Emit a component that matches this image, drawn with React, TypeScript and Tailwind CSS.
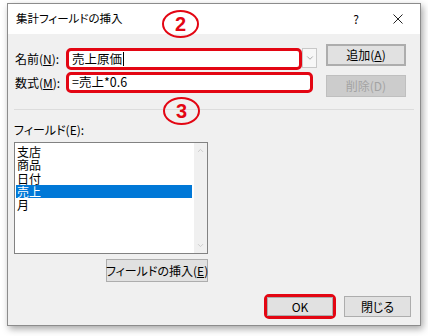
import { ChevronDown, ChevronUp } from 'lucide-react';

const jp = "font-['Meiryo_UI','Noto_Sans_CJK_JP',sans-serif] [font-feature-settings:'palt']";

function Marker({ n, className }: { n: string; className: string }) {
  // red annotation ellipse drawn over the dialog
  return (
    <div
      className={`absolute w-[37px] h-[28px] rounded-[50%] border-[2.5px] border-[#e30613] flex items-center justify-center ${className}`}
    >
      <span className="font-['Liberation_Sans',sans-serif] font-bold text-[20px] leading-none text-[#e30613]">{n}</span>
    </div>
  );
}

function Btn({
  children,
  className = '',
}: {
  children: React.ReactNode;
  className?: string;
}) {
  return (
    <div
      className={`flex items-center justify-center whitespace-nowrap bg-[#e1e1e1] border border-[#adadad] text-[12px] font-normal text-black ${className}`}
    >
      {children}
    </div>
  );
}

export default function App() {
  const fields = ['支店', '商品', '日付', '売上', '月'];

  return (
    <div className={`relative w-[428px] h-[336px] bg-white pt-[3px] pl-[7px] ${jp}`}>
      <div className="w-[414px] h-[323px] border border-[#8c8c8c] flex flex-col shadow-[2px_3px_7px_rgba(0,0,0,0.35)]">
        {/* title bar */}
        <div className="h-[30px] shrink-0 bg-white flex items-center pl-[8px] text-[11.5px] text-black">
          <span>集計フィールドの挿入</span>
          <span className="ml-auto w-[10px] text-center text-[12px]">?</span>
          <svg className="ml-[32px] mr-[17px]" width="10" height="10" viewBox="0 0 10 10">
            <path d="M0.5 0.5 L9.5 9.5 M9.5 0.5 L0.5 9.5" stroke="#222" strokeWidth="1" />
          </svg>
        </div>

        {/* body */}
        <div className="flex-1 bg-[#f0f0f0] flex flex-col">
          <div className="flex items-start pt-[10px]">
            <div className="flex flex-col gap-[2px] mt-[4px] pl-[7px] text-[12px]">
              <div className="flex items-center h-[22px]">
                <span className="w-[51px]">
                  名前(<span className="underline">N</span>):
                </span>
                <div className="w-[236px] h-[22px] bg-white border-[3px] border-[#e30613] rounded-[5px] flex items-center pl-[3px] text-[12.5px]">
                  売上原価
                  <span className="ml-[1px] w-px h-[14px] bg-black" />
                </div>
                <div className="w-[15px] h-[20px] self-start bg-[#f7f7f7] border border-[#c8c8c8] flex items-center justify-center">
                  <ChevronDown className="w-[10px] h-[10px] text-[#7a7a7a]" strokeWidth={1.5} />
                </div>
              </div>
              <div className="flex items-center h-[21px]">
                <span className="w-[51px]">
                  数式(<span className="underline">M</span>):
                </span>
                <div className="w-[247px] h-[21px] bg-white border-[3px] border-[#e30613] rounded-[5px] flex items-center pl-[3px] text-[12.5px]">
                  =売上*0.6
                </div>
              </div>
            </div>
            <div className="ml-[9px] flex flex-col gap-[9px]">
              <Btn className="w-[80px] h-[22px] border-[#0078d7] border-2">
                追加(<span className="underline">A</span>)
              </Btn>
              <div className="w-[80px] h-[22px] flex items-center justify-center bg-[#cccccc] border border-[#bfbfbf] text-[12px] text-[#a3a3a3]">
                削除(D)
              </div>
            </div>
          </div>

          <div className="mt-[12px] mx-[6px] border-t border-[#dcdcdc]" />

          <div className="mt-[12px] pl-[6px] h-[16px] flex items-center text-[12px]">フィールド(E):</div>

          <div className="mt-[4px] ml-[6px] w-[194px] h-[112px] bg-white border border-[#828282] flex">
            <div className="flex-1 pt-[2px] pl-px text-[12px]">
              {fields.map((f) => (
                <div
                  key={f}
                  className={`h-[13.3px] leading-[13.3px] pl-px ${f === '売上' ? 'bg-[#0078d7] text-white' : 'text-black'}`}
                >
                  {f}
                </div>
              ))}
            </div>
            <div className="w-[13px] ml-[2px] bg-[#f0f0f0] flex flex-col items-center justify-between py-[3px]">
              <ChevronUp className="w-[9px] h-[9px] text-[#c2c2c2]" strokeWidth={2} />
              <ChevronDown className="w-[9px] h-[9px] text-[#c2c2c2]" strokeWidth={2} />
            </div>
          </div>

          <Btn className="mt-[5px] ml-[98px] w-[102px] h-[23px]">
            フィールドの挿入(<span className="underline">E</span>)
          </Btn>

          <div className="mt-[12px] flex justify-end items-center gap-[8px] pr-[9px]">
            <div className="w-[72px] h-[25px] border-[3px] border-[#e30613] rounded-[5px] flex">
              <Btn className="flex-1 border-[#adadad]">OK</Btn>
            </div>
            <Btn className="w-[67px] h-[21px]">閉じる</Btn>
          </div>
        </div>
      </div>

      <Marker n="2" className="left-[162px] top-[10px]" />
      <Marker n="3" className="left-[163px] top-[97px]" />
    </div>
  );
}
